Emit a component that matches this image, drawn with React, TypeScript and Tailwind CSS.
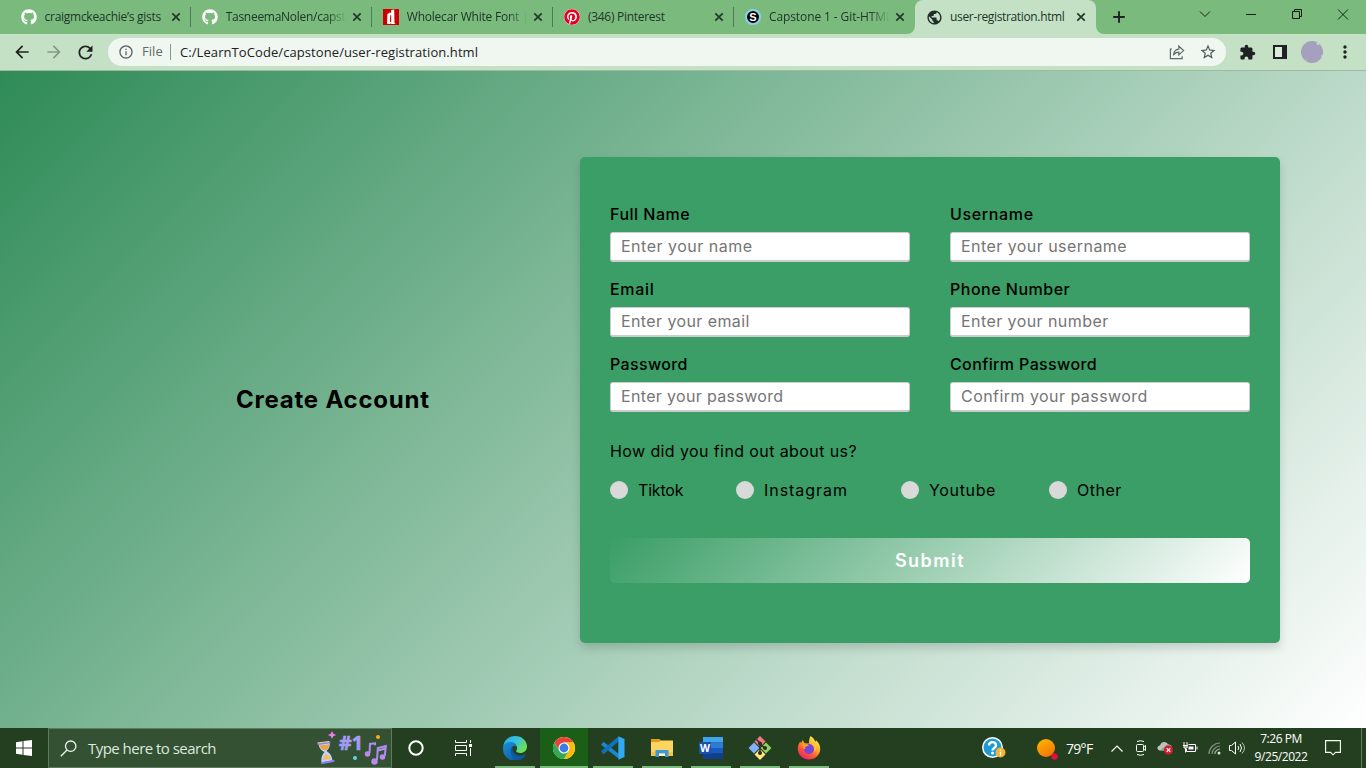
import React from "react";
import { FaGithub, FaPinterest } from "react-icons/fa";
import { MdArrowBack, MdArrowForward, MdExtension, MdInfoOutline, MdMoreVert, MdPublic, MdRefresh, MdStarBorder } from "react-icons/md";

const ui = "font-['Open_Sans','Noto_Sans',sans-serif]";

function CloseIcon() {
  return (
    <svg width="16" height="16" viewBox="0 0 16 16" className="shrink-0">
      <path d="M4.3 4.3l7.4 7.4M11.7 4.3l-7.4 7.4" stroke="#22382a" strokeWidth="1.7" fill="none" />
    </svg>
  );
}

function FontSiteIcon() {
  return (
    <svg width="16" height="16" viewBox="0 0 16 16">
      <rect width="16" height="16" fill="#cc0000" />
      <path d="M8.2 1l3-.4.3 13.6 1.2.8H8.4L8 14.2l-1 .9-3-.4L4.4 5 7 3.6l1.1.5z" fill="#fff" />
      <path d="M7.2 6.2h1v6.6l-1.2.4z" fill="#cc0000" />
    </svg>
  );
}

function CapstoneIcon() {
  return (
    <span className="flex size-4 items-center justify-center rounded-full border-2 border-[#8bd3f2] bg-black font-['Liberation_Sans',sans-serif] text-[11px] leading-none font-bold text-white">
      S
    </span>
  );
}

type TabProps = { icon: React.ReactNode; title: string; tracking: string; fade?: boolean; active?: boolean; divider?: boolean };

function Tab({ icon, title, tracking, fade, active, divider }: TabProps) {
  return (
    <div className={`relative flex h-[34px] w-[181.1px] shrink-0 items-center pr-[7px] pl-[11px] ${active ? "rounded-t-lg bg-[#c5e1c5]" : ""}`}>
      {active && (
        <>
          <svg className="absolute bottom-0 -left-2" width="8" height="8"><path d="M8 0v8H0a8 8 0 0 0 8-8z" fill="#c5e1c5" /></svg>
          <svg className="absolute -right-2 bottom-0" width="8" height="8"><path d="M0 0v8h8a8 8 0 0 1-8-8z" fill="#c5e1c5" /></svg>
        </>
      )}
      <span className="flex size-4 shrink-0 items-center justify-center">{icon}</span>
      <span
        className={`ml-2 min-w-0 flex-1 overflow-hidden text-[12px] whitespace-nowrap text-[#20352a] ${tracking} ${fade ? "mask-[linear-gradient(to_right,black_82%,transparent_98%)]" : ""}`}
      >
        {title}
      </span>
      <CloseIcon />
      {divider && <span className="absolute top-[7px] right-0 h-5 w-px bg-[#4c7c52]" />}
    </div>
  );
}

function TabStrip() {
  return (
    <div className="flex h-[34px] items-center bg-[#7abb7d] pl-[9.6px]">
      <Tab icon={<FaGithub size={16} color="#fff" />} title="craigmckeachie’s gists" tracking="tracking-[-0.28px]" divider />
      <Tab icon={<FaGithub size={16} color="#fff" />} title="TasneemaNolen/capstone" tracking="tracking-[-0.28px]" fade divider />
      <Tab icon={<FontSiteIcon />} title="Wholecar White Font | dafont" tracking="tracking-[-0.22px]" fade divider />
      <Tab icon={<span className="flex size-4 items-center justify-center rounded-full bg-white"><FaPinterest size={16} color="#e60023" /></span>} title="(346) Pinterest" tracking="tracking-[-0.28px]" divider />
      <Tab icon={<CapstoneIcon />} title="Capstone 1 - Git-HTML-CSS" tracking="tracking-[-0.1px]" fade />
      <Tab icon={<MdPublic size={17} color="#202d28" className="shrink-0" />} title="user-registration.html" tracking="tracking-[-0.35px]" active />
      <svg className="ml-[15px]" width="16" height="16" viewBox="0 0 16 16"><path d="M8 2.2v11.6M2.2 8h11.6" stroke="#202124" strokeWidth="1.9" /></svg>
      <svg className="ml-[70px]" width="161" height="34" viewBox="1197 0 161 34" fill="none" stroke="#142417" strokeWidth="1">
        <path d="M1200 11.5l5 5 5-5M1246 14.5h10" />
        <path d="M1292.5 11.5h7v7h-7zM1294.5 11.5v-2h7v7h-2" stroke="#101a12" />
        <path d="M1338 9.5l10 10M1348 9.5l-10 10" />
      </svg>
    </div>
  );
}

function Toolbar() {
  return (
    <div className="flex h-[37px] items-center border-b border-[#a0b9a3] bg-[#c5e1c5] pl-3">
      <MdArrowBack size={20} color="#202124" />
      <MdArrowForward size={20} color="#85988a" className="ml-3" />
      <MdRefresh size={21} color="#202124" className="ml-[11px]" />
      <div className="ml-3 flex h-7 w-[1118px] items-center rounded-full bg-[#f0f7f1] pl-[10px]">
        <MdInfoOutline size={16} color="#5f6368" />
        <span className="ml-[8px] w-[20px] text-[13px] tracking-[0.05px] text-[#5f6b66]">File</span>
        <span className="ml-2 h-4 w-px bg-[#8c9690]" />
        <span className="ml-[9px] flex-1 pt-px text-[13px] tracking-[0.08px] whitespace-nowrap text-[#202124]">C:/LearnToCode/capstone/user-registration.html</span>
        <svg width="18" height="18" viewBox="0 0 18 18" fill="none" stroke="#5f6b66" strokeWidth="1.2">
          <path d="M4 6H2.4v9.6h11.800v-2.400" />
          <path d="M5.400 12.200c.4-4 2.400-5.800 5.400-6.100V3.200l4.800 4.400-4.800 4.300V9.200c-2.300 0-4 .9-5.400 3z" />
        </svg>
        <MdStarBorder size={18} color="#4f5b56" className="mr-[9px] ml-[13px]" />
      </div>
      <MdExtension size={17} color="#202124" className="ml-[13px]" />
      <svg className="ml-[17px]" width="14" height="14" viewBox="0 0 14 14"><path d="M0 0h14v14H0z" fill="#202124" /><path d="M2 2h7v10H2z" fill="#d9ecd9" /></svg>
      <svg className="ml-[14px]" width="22" height="22" viewBox="0 0 22 22">
        <circle cx="11" cy="11" r="11" fill="#a5a0bd" />
        <path d="M15 2l2-.2 1.600 1.500-1.700 1zM20 14l2 1-1.400 1.200zM3 17l1 1.400 1.600.3-.4 1.500z" fill="#d4d2f8" />
      </svg>
      <MdMoreVert size={20} color="#202124" className="ml-[12px]" />
    </div>
  );
}

function Field({ label, placeholder, labelTracking, tracking }: { label: string; placeholder: string; labelTracking: string; tracking: string }) {
  return (
    <label className="flex h-[75px] w-[300px] flex-col">
      <span className={`mb-[6px] h-6 text-[16px] leading-6 font-medium whitespace-nowrap text-black ${labelTracking}`}>{label}</span>
      <input
        placeholder={placeholder}
        className={`h-[30px] w-full rounded-[3px] border border-b-2 border-[#ccc] bg-white pb-[2px] pl-[10px] text-[16px] text-[#757575] outline-none placeholder:text-[#757575] ${tracking}`}
      />
    </label>
  );
}

function Choice({ text, tracking, width }: { text: string; tracking: string; width: string }) {
  return (
    <span className={`flex items-center ${width}`}>
      <span className="mr-[10px] size-[18px] shrink-0 rounded-full bg-[#d9d9d9]" />
      <span className={`text-[16px] leading-6 text-black ${tracking}`}>{text}</span>
    </span>
  );
}

function Registration() {
  return (
    <main className="flex h-[657px] bg-[linear-gradient(135deg,#2e8b57,#ffffff)] pt-[86px] font-['Inter',sans-serif]">
      <div className="flex h-[486px] w-[580px] items-center pl-[236px]">
        <h1 className="text-[24px] leading-9 font-bold tracking-[0.78px] whitespace-nowrap text-black">Create Account</h1>
      </div>
      <form className="flex h-[486px] w-[700px] flex-col rounded-[5px] bg-[#3a9e66] px-[30px] pt-[45px] shadow-[0_5px_10px_rgba(0,0,0,0.15)]">
        <div className="grid grid-cols-2 gap-x-10">
          <Field label="Full Name" placeholder="Enter your name" labelTracking="tracking-[0.5px]" tracking="tracking-[0.5px]" />
          <Field label="Username" placeholder="Enter your username" labelTracking="tracking-[0.65px]" tracking="tracking-[0.45px]" />
          <Field label="Email" placeholder="Enter your email" labelTracking="tracking-[0.7px]" tracking="tracking-[0.4px]" />
          <Field label="Phone Number" placeholder="Enter your number" labelTracking="tracking-[0.5px]" tracking="tracking-[0.43px]" />
          <Field label="Password" placeholder="Enter your password" labelTracking="tracking-[0.35px]" tracking="tracking-[0.34px]" />
          <Field label="Confirm Password" placeholder="Confirm your password" labelTracking="tracking-[0.38px]" tracking="tracking-[0.45px]" />
        </div>
        <p className="mt-[12px] text-[16px] leading-6 tracking-[0.4px] text-black">How did you find out about us?</p>
        <div className="mt-[15px] flex">
          <Choice text="Tiktok" tracking="tracking-[-0.2px]" width="w-[126px]" />
          <Choice text="Instagram" tracking="tracking-[0.95px]" width="w-[165px]" />
          <Choice text="Youtube" tracking="tracking-[0.65px]" width="w-[148px]" />
          <Choice text="Other" tracking="tracking-[0.5px]" width="w-[100px]" />
        </div>
        <button type="button" className="mt-[36px] h-[45px] rounded-[5px] bg-[linear-gradient(135deg,#3a9e66,#ffffff)] text-[18px] font-semibold tracking-[1.5px] text-white">
          Submit
        </button>
      </form>
    </main>
  );
}

function SearchArt() {
  return (
    <svg width="72" height="38" viewBox="315 729 72 38">
      <defs>
        <linearGradient id="purple" x1="0" y1="0" x2="0" y2="1"><stop offset="0" stopColor="#b99bf5" /><stop offset="1" stopColor="#8f9cf3" /></linearGradient>
        <linearGradient id="note" x1="0" y1="0" x2="1" y2="1"><stop offset="0" stopColor="#b794f3" /><stop offset="1" stopColor="#c07be8" /></linearGradient>
      </defs>
      <path d="M331 731l1.300 2.800 2.900 1.200-2.900 1.300-1.300 2.800-1.300-2.800-2.900-1.300 2.900-1.200z" fill="#f07af0" />
      <path d="M317.500 743.500l11-1.500c1 4.500-1 7-3 9 3.500 2 5.500 5 6 9.500l-11 2c-.5-5 .5-7.500 3-10.500-4-2-5.500-4.500-6-8.500z" fill="#b9d6ff" />
      <path d="M318.500 745.500l9.500-1c0 3-1.500 5-4 6-3-1-5-2.500-5.500-5z" fill="#f6a23c" />
      <path d="M322 760c0-3 1.500-5 3-6 2 1 4.500 3 5 5z" fill="#ffb65c" />
      <path d="M317.500 744l11-1.700M321 763l11.500-2" stroke="#8c7ff0" strokeWidth="2" strokeLinecap="round" />
      <path d="M316.500 743l11.500-1.500" stroke="#ffd488" strokeWidth="1" />
      <text x="338" y="749.500" fontFamily="Open Sans, sans-serif" fontWeight="700" fontSize="20" textLength="24" lengthAdjust="spacingAndGlyphs" fill="url(#purple)" stroke="url(#purple)" strokeWidth=".6">#1</text>
      <circle cx="377" cy="737" r="2" fill="#ffad0d" />
      <circle cx="354" cy="758" r="2" fill="#62d5df" />
      <g stroke="#b08df2" strokeWidth="2" fill="none"><path d="M368.500 753l.5-9 5-.7v2M376 760l.8-12 8-2-1 10M377 750.500l7.500-2" /></g>
      <g fill="#bb89ee"><circle cx="366.500" cy="754" r="2.700" /><circle cx="373.500" cy="761.500" r="3.200" /><circle cx="381.500" cy="757" r="2.800" /></g>
    </svg>
  );
}

function EdgeIcon() {
  return (
    <svg width="24" height="24" viewBox="0 0 24 24">
      <defs>
        <linearGradient id="edgeTop" x1="0" y1="0" x2="1" y2=".6"><stop offset="0" stopColor="#2aa6e8" /><stop offset=".5" stopColor="#35c2e0" /><stop offset="1" stopColor="#6fe04f" /></linearGradient>
        <linearGradient id="edgeLow" x1="0" y1="0" x2="1" y2="1"><stop offset="0" stopColor="#1b91db" /><stop offset="1" stopColor="#0b4a92" /></linearGradient>
      </defs>
      <path d="M.3 10.500C1 4 6 0 12 0c7 0 12 5 12 10.500 0 4.300-3.300 6.500-6.500 6.500-3 0-4.400-1.200-4.400-2 0-.6 1-1 1-3C14.100 9 11 7 7.500 7 4 7 1.200 8.500.3 10.500z" fill="url(#edgeTop)" />
      <path d="M.1 12C0 8.500 3.500 6 7.500 6c4.600 0 6.600 3.500 6.600 5.500 0 0-1.600-2.500-3.900-1.200C7 12 7.500 21 16.500 20c2.500 0 4.200-.8 5.500-1.500.5-.3.800 0 .5.500A12 12 0 0 1 .1 12z" fill="url(#edgeLow)" />
      <path d="M9.500 10.800c-3.500 3.800-1.300 11 4.500 12.900A12 12 0 0 0 22.500 19c.3-.5 0-.8-.5-.5-6.500 3.500-13.500-.5-12.500-7.700z" fill="#0c59a4" />
    </svg>
  );
}

function ChromeIcon() {
  return (
    <svg width="22" height="22" viewBox="0 0 22 22">
      <circle cx="11" cy="11" r="11" fill="#fff" />
      <path d="M1.470 5.500A11 11 0 0 1 20.530 5.500H11L6.240 13.750z" fill="#ea4335" />
      <path d="M20.530 5.500A11 11 0 0 1 11 22l4.760-8.250L11 5.500z" fill="#fbbc05" />
      <path d="M11 22A11 11 0 0 1 1.470 5.500l4.770 8.250L15.760 13.750z" fill="#34a853" />
      <circle cx="11" cy="11" r="5.500" fill="#fff" />
      <circle cx="11" cy="11" r="4.400" fill="#3b7de8" />
    </svg>
  );
}

function CodeIcon() {
  return (
    <svg width="24" height="24" viewBox="0 0 24 24" fill="none">
      <path d="M1.300 7.200L18 20.500" stroke="#1b86cf" strokeWidth="4" />
      <path d="M1.300 16.800L18 2.500" stroke="#0f72b8" strokeWidth="4" />
      <path d="M17.300.3L23.500 3v18l-6.200 2.700z" fill="#32a9f1" />
    </svg>
  );
}

function FolderIcon() {
  return (
    <svg width="22" height="20" viewBox="0 0 22 20">
      <path d="M0 1h8.500l1.500 2H22v15H0z" fill="#e39d12" />
      <path d="M0 4h8l1.500-1.500H22V18H0z" fill="#fcd462" />
      <path d="M0 14h22v4H0z" fill="#f6c343" />
      <path d="M4.500 19v-7h13v7h-3.500v-3.500H8V19z" fill="#3d98da" />
      <path d="M8 15.500h6V18H8z" fill="#fff3c4" />
    </svg>
  );
}

function WordIcon() {
  return (
    <svg width="24" height="22" viewBox="0 0 24 22">
      <path d="M4 0h20v5.500H4z" fill="#41a5ee" />
      <path d="M4 5.500h20V11H4z" fill="#2b7cd3" />
      <path d="M4 11h20v5.500H4z" fill="#185abd" />
      <path d="M4 16.500h20V22H4z" fill="#103f91" />
      <rect y="5" width="12" height="12" rx="1" fill="#1852b0" />
      <text x="1" y="15" fontSize="11" fontWeight="700" fontFamily="Open Sans, sans-serif" textLength="10" lengthAdjust="spacingAndGlyphs" fill="#fff">W</text>
    </svg>
  );
}

function GitIcon() {
  return (
    <svg width="24" height="24" viewBox="0 0 24 24">
      <path d="M12 0l5.500 5.500L12 11 6.500 5.500z" fill="#f07c80" />
      <path d="M6 6.500l5.500 5.500L6 17.500.5 12z" fill="#80b3ff" />
      <path d="M18 6.500l5.500 5.500-5.500 5.500-5.500-5.500z" fill="#8dd35f" />
      <path d="M12 13l5.500 5.500L12 24l-5.500-5.500z" fill="#ffe680" />
      <path d="M8.500 3.500L12 7v10M12 8l5 4.500" stroke="#302c22" strokeWidth="1.500" fill="none" />
      <g fill="#302c22"><circle cx="12" cy="7.500" r="2" /><circle cx="12" cy="17" r="2" /><circle cx="17" cy="12" r="2" /></g>
    </svg>
  );
}

function FirefoxIcon() {
  return (
    <svg width="24" height="24" viewBox="0 0 24 24">
      <defs>
        <linearGradient id="fox" x1=".8" y1="0" x2=".2" y2="1"><stop offset="0" stopColor="#fff04a" /><stop offset=".4" stopColor="#ffae2b" /><stop offset=".65" stopColor="#ff5a37" /><stop offset="1" stopColor="#ec1e72" /></linearGradient>
      </defs>
      <path d="M13.500 0c2.500 1.500 4.500 4 4.800 6l.7-1.700c3 2.300 4.500 5.700 4.200 9.200C22.700 19.500 18 23.500 12 23.500S.8 19 .8 13C.8 9.500 2 7 3.500 5.500l.3 2C4.500 6 5.500 4.500 6 4c.2 1.500 1 2.500 2 3.500h4c0-3 .3-5 1.500-7.500z" fill="url(#fox)" />
      <circle cx="12" cy="13" r="5" fill="#7544d8" />
      <path d="M5.500 8c2-1 4.500-.5 6.500 1.500-1 .2-2 1-3.300 1.200-1 .3-1 1.800.3 2.300-2 .5-4-1-3.500-5z" fill="#ff9a28" />
      <path d="M15 8c3 1.500 3.500 5 2 8 2.500-1.500 3-6 1-9z" fill="#ffc83a" />
    </svg>
  );
}

function AppTile({ children, active }: { children: React.ReactNode; active?: boolean }) {
  return (
    <div className={`flex h-10 w-12 shrink-0 flex-col items-center ${active ? "bg-[#1b5e17]" : ""}`}>
      <span className="flex h-[38px] items-center justify-center pt-[2px]">{children}</span>
      <span className={`h-[2px] bg-[#7abb7d] ${active ? "w-12" : "w-10"}`} />
    </div>
  );
}

function Slot({ width, children }: { width: string; children: React.ReactNode }) {
  return <span className={`flex h-10 shrink-0 items-center justify-center ${width}`}>{children}</span>;
}

function Taskbar() {
  return (
    <footer className="flex h-10 items-center bg-[#243f1f] text-white">
      <Slot width="w-12">
        <svg width="16" height="16" viewBox="0 0 16 16" fill="#fff"><path d="M0 2.200L6.500 1.300v6.200H0zM7.500 1.100L16 0v7.500H7.500zM0 8.500h6.500v6.200L0 13.800zM7.500 8.500H16V16l-8.500-1.100z" /></svg>
      </Slot>
      <div className="flex h-10 w-[344px] shrink-0 items-center border border-[#607a5f] bg-[#345134] pl-[11px]">
        <svg width="17" height="17" viewBox="0 0 17 17" fill="none" stroke="#f0f4f0" strokeWidth="1.300"><circle cx="10.700" cy="6.200" r="5.200" /><path d="M7 10L.8 16.200" /></svg>
        <span className="ml-[11px] flex-1 text-[15px] leading-5 tracking-[-0.53px] text-[#dfe8df]">Type here to search</span>
        <span className="mr-[3px]"><SearchArt /></span>
      </div>
      <Slot width="w-12">
        <svg width="16" height="16" viewBox="0 0 16 16"><circle cx="8" cy="8" r="6.700" fill="none" stroke="#fff" strokeWidth="2" /></svg>
      </Slot>
      <Slot width="w-[46px]">
        <svg width="17" height="16" viewBox="0 0 17 16" fill="none" stroke="#fff"><path d="M.5 0v2.500h11V0M.5 5.500h11v5H.5zM.5 16v-2.500h11V16M15.500 0v3M15.500 8v8" /><path d="M14 4h3v3h-3z" fill="#fff" stroke="none" /></svg>
      </Slot>
      <nav className="ml-[5px] flex w-[342px] shrink-0 gap-px">
        <AppTile><EdgeIcon /></AppTile>
        <AppTile active><ChromeIcon /></AppTile>
        <AppTile><CodeIcon /></AppTile>
        <AppTile><FolderIcon /></AppTile>
        <AppTile><WordIcon /></AppTile>
        <AppTile><GitIcon /></AppTile>
        <AppTile><FirefoxIcon /></AppTile>
      </nav>
      <div className="ml-[145px] flex shrink-0 items-center">
        <Slot width="w-8">
          <svg width="24" height="22" viewBox="0 0 24 22">
            <circle cx="10.500" cy="10.500" r="10.500" fill="#fff" /><circle cx="10.500" cy="10.500" r="9" fill="#1b9ad6" />
            <path d="M7 8.500c0-4.500 7-4.500 7 0 0 2.500-3.500 2.500-3.500 5" fill="none" stroke="#fff" strokeWidth="2.400" /><circle cx="10.500" cy="16" r="1.500" fill="#fff" />
            <circle cx="18.500" cy="15.500" r="5" fill="#f9b233" /><path d="M18.500 12.500v1.200M18.500 14.800v4" stroke="#fff" strokeWidth="1.300" />
          </svg>
        </Slot>
        <div className="ml-[25px] flex h-10 w-[70px] items-center pt-[2px]">
          <svg width="24" height="24" viewBox="0 0 24 24">
            <defs><linearGradient id="sun" x1="0" y1="0" x2=".5" y2="1"><stop offset="0" stopColor="#ffb900" /><stop offset="1" stopColor="#f47a06" /></linearGradient></defs>
            <circle cx="11" cy="11" r="9" fill="url(#sun)" /><circle cx="19.500" cy="19.500" r="3.200" fill="#e3103c" />
          </svg>
          <span className="ml-[7px] pb-[2px] text-[14px] tracking-[-0.7px]">79°F</span>
        </div>
        <Slot width="w-6"><svg width="12" height="7" viewBox="0 0 12 7"><path d="M.5 6.500L6 1l5.500 5.500" stroke="#fff" strokeWidth="1.200" fill="none" /></svg></Slot>
        <Slot width="w-6">
          <svg width="12" height="16" viewBox="0 0 12 16" fill="none" stroke="#fff"><rect x="1.500" y="4.500" width="7" height="7" rx="1" /><path d="M8.500 7l2-1.500v5l-2-1.500M2 1.500Q5.500 0 9 1.500M2 14.500q3.500 1.500 7 0" /></svg>
        </Slot>
        <Slot width="w-6">
          <svg width="17" height="14" viewBox="0 0 17 14"><path d="M3 9.500C-.5 9-.5 5 3 4.500 4 0 10 0 11 3.500c3-.5 4 2 4 4v2z" fill="#bfc3bf" /><path d="M3 9.500l7-6c3-.5 5 1 5 6z" fill="#929892" /><circle cx="11.500" cy="9" r="4.600" fill="#d51c2c" /><path d="M9.700 7.200l3.600 3.600M13.300 7.200l-3.600 3.600" stroke="#fff" strokeWidth="1.200" /></svg>
        </Slot>
        <Slot width="w-[25px]">
          <svg width="16" height="12" viewBox="0 0 16 12" fill="none" stroke="#fff"><path d="M6.500 2.500h7v7H4.500V7" /><path d="M6.500 4.500h5v3h-5z" fill="#fff" stroke="none" /><path d="M15 4.500v3M2 0v3M5 0v3M1 3.500h5M2 4h3v2H2zM3.500 6v4.500" /></svg>
        </Slot>
        <Slot width="w-6">
          <svg width="13" height="13" viewBox="0 0 13 13" fill="none" strokeWidth="1.200"><path d="M1 12C1 6 6 1 12 1M4 12c0-4 4-8 8-8" stroke="#819080" /><path d="M6.800 12c0-2.500 2.500-5 5.200-5" stroke="#aeb8ad" /><circle cx="11" cy="11" r="1.500" fill="#dde3dc" /></svg>
        </Slot>
        <Slot width="w-[23px]">
          <svg width="17" height="14" viewBox="0 0 17 14" fill="none" stroke="#fff"><path d="M.5 4.500h2l4-3.500v12l-4-3.500h-2zM9 5q1.500 2 0 4M11 3q3 4 0 8" /><path d="M13 1.500q5 5.500 0 11" stroke="#b8c4b7" /></svg>
        </Slot>
        <div className="flex w-16 flex-col items-center text-[12px] leading-[18px] tracking-[-0.45px] whitespace-nowrap">
          <span>7:26 PM</span>
          <span>9/25/2022</span>
        </div>
        <Slot width="w-10"><svg width="16" height="16" viewBox="0 0 16 16" fill="none" stroke="#fff" strokeWidth="1.100"><path d="M.6.600h14.800v11.800H10.500L8 14.800l-2.500-2.400H.6z" /></svg></Slot>
        <span className="ml-2 h-10 w-px bg-[#64785f]" />
      </div>
    </footer>
  );
}

export default function App() {
  return (
    <div className={`h-[768px] w-[1366px] overflow-hidden ${ui}`}>
      <TabStrip />
      <Toolbar />
      <Registration />
      <Taskbar />
    </div>
  );
}
